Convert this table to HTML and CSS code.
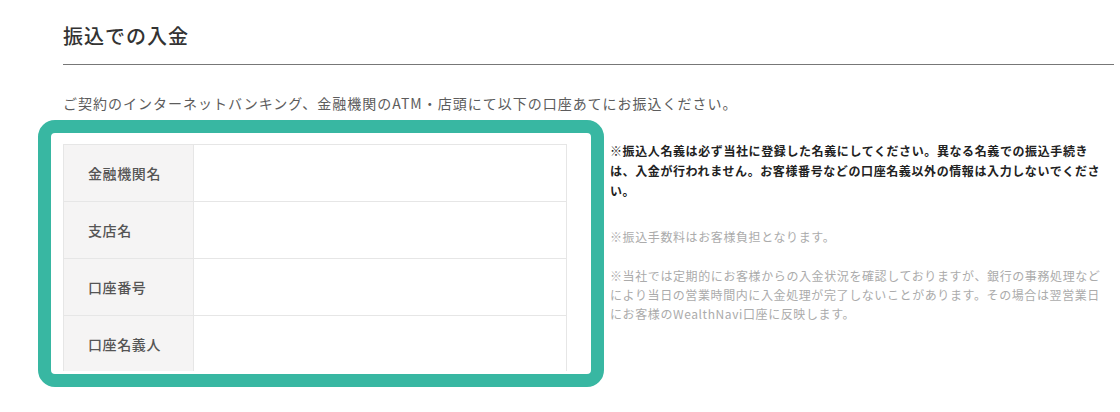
FILE: index.html
```html
<!DOCTYPE html>
<html lang="ja">
<head>
<meta charset="utf-8">
<title>振込での入金</title>
<link rel="stylesheet" href="styles.css">
</head>
<body>
<main class="page">
  <h2 class="title">振込での入金</h2>
  <p class="intro">ご契約のインターネットバンキング、金融機関のATM・店頭にて以下の口座あてにお振込ください。</p>
  <div class="deposit">
    <div class="highlight">
      <div class="table-clip">
        <table class="account">
          <tr><th>金融機関名</th><td></td></tr>
          <tr><th>支店名</th><td></td></tr>
          <tr><th>口座番号</th><td></td></tr>
          <tr><th>口座名義人</th><td></td></tr>
        </table>
      </div>
    </div>
    <div class="notes">
      <p class="note note-strong">※振込人名義は必ず当社に登録した名義にしてください。異なる名義での振込手続きは、入金が行われません。お客様番号などの口座名義以外の情報は入力しないでください。</p>
      <p class="note note-muted note-fee">※振込手数料はお客様負担となります。</p>
      <p class="note note-muted">※当社では定期的にお客様からの入金状況を確認しておりますが、銀行の事務処理などにより当日の営業時間内に入金処理が完了しないことがあります。その場合は翌営業日にお客様のWealthNavi口座に反映します。</p>
    </div>
  </div>
</main>
</body>
</html>
```

FILE: styles.css
```css
* {
  box-sizing: border-box;
}

html, body {
  margin: 0;
  padding: 0;
  background: #ffffff;
}

body {
  font-family: "Noto Sans CJK JP", "Noto Sans", sans-serif;
  color: #333333;
  width: 1120px;
  height: 412px;
  overflow: hidden;
}

.page {
  padding: 21px 6px 0 63px;
}

.title {
  margin: 0;
  font-size: 20px;
  line-height: 30px;
  font-weight: 500;
  letter-spacing: 1px;
  color: #333333;
  padding-bottom: 13px;
  border-bottom: 1px solid #777777;
}

.intro {
  margin: 28px 0 0;
  font-size: 14px;
  line-height: 20px;
  letter-spacing: 1px;
  color: #5c5c5c;
}

.deposit {
  display: flex;
  align-items: flex-start;
  margin-top: 7px;
  margin-left: -25px;
}

.highlight {
  width: 566px;
  height: 267px;
  flex: none;
  border: 13px solid #38b7a2;
  border-radius: 17px;
  padding: 11px 24px 0 12px;
  background: #ffffff;
}

.table-clip {
  height: 227px;
  overflow: hidden;
}

.account {
  width: 100%;
  border-collapse: collapse;
  table-layout: fixed;
}

.account th,
.account td {
  height: 57px;
  border: 1px solid #e6e6e6;
  padding: 0;
}

.account th {
  width: 130px;
  background: #f5f4f4;
  text-align: left;
  padding-left: 24px;
  font-size: 14px;
  font-weight: 500;
  letter-spacing: 0.6px;
  color: #555555;
}

.account td {
  background: #ffffff;
}

.notes {
  width: 496px;
  margin-left: 6px;
  padding-top: 21px;
}

.note {
  margin: 0;
  font-size: 12px;
  letter-spacing: 0.6px;
}

.note-strong {
  font-weight: 700;
  line-height: 20px;
  color: #222222;
}

.note-muted {
  line-height: 19px;
  color: #ababab;
}

.note-fee {
  margin: 26px 0 20px;
}
```
